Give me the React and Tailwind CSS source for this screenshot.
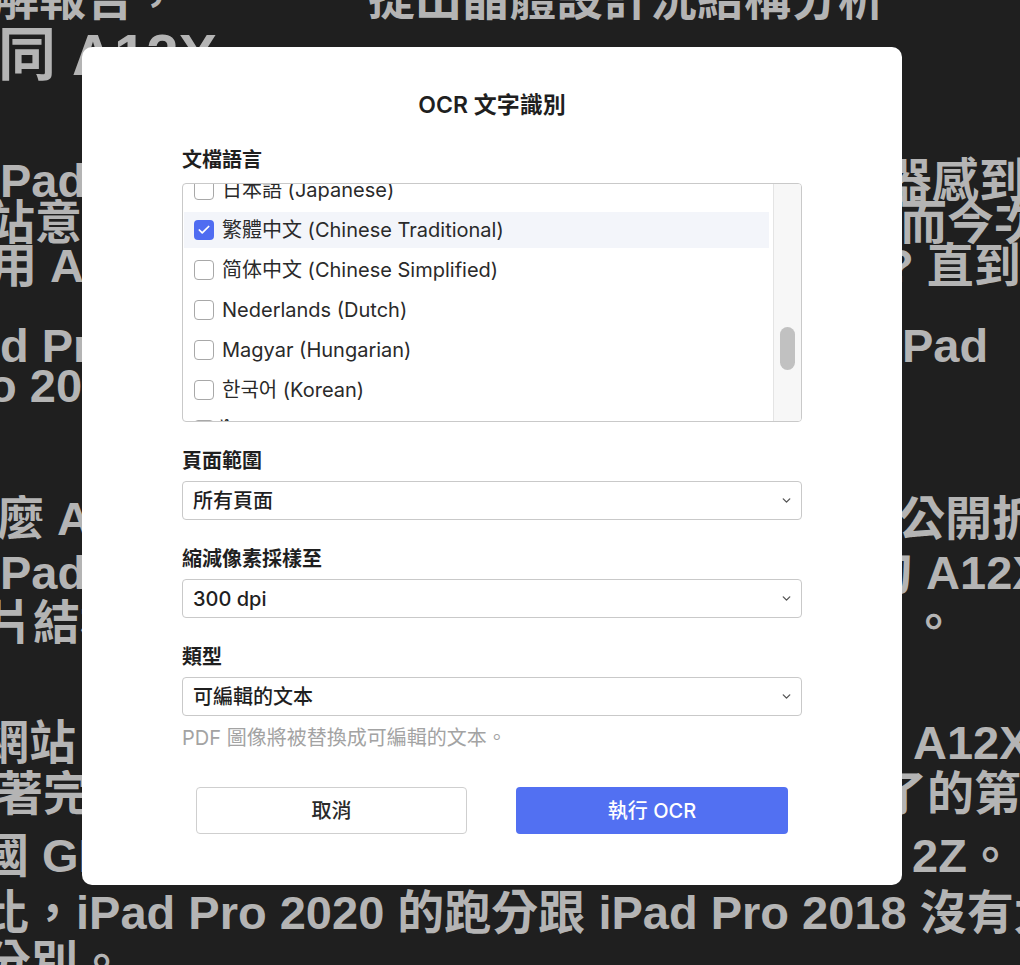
import React from "react";
import { Check, ChevronDown } from "lucide-react";

const ui = "font-['Inter','Noto_Sans_CJK_TC',sans-serif]";
const bgFont = "font-['Liberation_Sans','Noto_Sans_CJK_TC',sans-serif]";

const languages = [
  { label: "日本語 (Japanese)", checked: false },
  { label: "繁體中文 (Chinese Traditional)", checked: true },
  { label: "简体中文 (Chinese Simplified)", checked: false },
  { label: "Nederlands (Dutch)", checked: false },
  { label: "Magyar (Hungarian)", checked: false },
  { label: "한국어 (Korean)", checked: false },
  { label: "ไทย (Thai)", checked: false },
];

// one line of the article behind the dialog: a left fragment and a right fragment
const Line = ({ h, mt = "", left, leftShift = "", right, rightShift = "", size = "text-[47px]", full = false }) => (
  <div className={`flex items-center whitespace-nowrap ${h} ${mt} ${size} leading-none`}>
    {full ? (
      <span className={`inline-block ${leftShift}`}>{left}</span>
    ) : (
      <div className="w-[880px] shrink-0 overflow-hidden">
        <span className={`inline-block ${leftShift}`}>{left}</span>
      </div>
    )}
    {right && <span className={`inline-block ${rightShift}`}>{right}</span>}
  </div>
);

const Select = ({ value }) => (
  <div className="mt-[6px] flex h-[39px] items-center justify-between rounded-[4px] border border-[#c9c9c9] bg-white pl-[10px] pr-[8px]">
    <span className="text-[20px] font-medium text-[#1f1f1f]">{value}</span>
    <ChevronDown size={13} strokeWidth={2.5} className="text-[#555]" />
  </div>
);

const Label = ({ children, mt = "mt-[25px]" }) => (
  <div className={`${mt} text-[20px] leading-[28px] font-semibold text-[#1f1f1f]`}>{children}</div>
);

export default function App() {
  return (
    <div className="relative h-[965px] w-[1020px] overflow-hidden bg-[#1f1f1f]">
      {/* article text in the background */}
      <div className={`${bgFont} font-bold text-[#b4b4b4]`}>
        <Line h="h-[48px]" mt="mt-[-26px]" left="解報告，　　　　提出晶體設計況結構分析了" leftShift="ml-[-8px]" />
        <Line h="h-[66px]" size="text-[58px]" left="同 A12X" leftShift="ml-[-2px]" />
        <Line h="h-[40px]" mt="mt-[72px]" left="Pad" right="器感到" rightShift="ml-[5px]" />
        <Line h="h-[44px]" left="站意外" leftShift="ml-[-12px]" right="而今次" rightShift="ml-[20px]" />
        <Line h="h-[42px]" left="用 A12X" leftShift="ml-[-10px]" right="? 直到" rightShift="ml-[5px]" />
        <Line h="h-[40px]" mt="mt-[39px]" left="d Pro" right="Pad" rightShift="ml-[22px]" />
        <Line h="h-[40px]" left="o 2018" leftShift="ml-[-12px]" />
        <Line h="h-[40px]" mt="mt-[93px]" left="麼 A12X" leftShift="ml-[-3px]" right="公開拆" rightShift="ml-[18px]" />
        <Line h="h-[68px]" left="Pad Pro" right="句 A12X" rightShift="ml-[-14px]" />
        <Line h="h-[32px]" left="片結構" leftShift="ml-[-14px]" right="。" rightShift="ml-[30px]" />
        <Line h="h-[40px]" mt="mt-[84px]" left="網站" leftShift="ml-[-18px]" right="A12X" rightShift="ml-[33px]" />
        <Line h="h-[62px]" left="著完全" leftShift="ml-[-4px]" right="了的第" rightShift="ml-[0px]" />
        <Line h="h-[62px]" left="國 GPU" leftShift="ml-[-18px]" right="2Z。" rightShift="ml-[32px]" />
        <Line h="h-[52px]" full left="比，iPad Pro 2020 的跑分跟 iPad Pro 2018 沒有太大" leftShift="ml-[-18px]" />
        <Line h="h-[48px]" left="分別。" leftShift="ml-[-16px]" />
      </div>

      {/* OCR dialog */}
      <div className={`${ui} absolute left-[82px] top-[47px] flex h-[838px] w-[820px] flex-col rounded-[10px] bg-white px-[100px] pt-[42px]`}>
        <h2 className="text-center text-[23px] leading-[32px] font-semibold text-[#1f1f1f]">OCR 文字識別</h2>

        <Label>文檔語言</Label>
        <div className="mt-[9px] flex h-[239px] overflow-hidden rounded-[4px] border border-[#c9c9c9]">
          <ul className="ml-[1px] mr-[4px] mt-[-12px] flex flex-1 flex-col gap-[4px]">
            {languages.map((lang) => (
              <li
                key={lang.label}
                className={`flex h-[36px] shrink-0 items-center gap-[8px] pl-[10px] ${lang.checked ? "bg-[#f3f5fa]" : ""}`}
              >
                {lang.checked ? (
                  <span className="flex h-[20px] w-[20px] items-center justify-center rounded-[4px] bg-[#4f6cf1]">
                    <Check size={14} strokeWidth={3} className="text-white" />
                  </span>
                ) : (
                  <span className="h-[20px] w-[20px] rounded-[4px] border border-[#a8a8a8] bg-white" />
                )}
                <span className="text-[20px] text-[#2a2a2a]">{lang.label}</span>
              </li>
            ))}
          </ul>
          {/* scrollbar track */}
          <div className="w-[28px] shrink-0 border-l border-[#e4e4e4] bg-[#f7f7f7]">
            <div className="mx-auto mt-[143px] h-[43px] w-[15px] rounded-full bg-[#c1c1c1]" />
          </div>
        </div>

        <Label>頁面範圍</Label>
        <Select value="所有頁面" />

        <Label>縮減像素採樣至</Label>
        <Select value="300 dpi" />

        <Label>類型</Label>
        <Select value="可編輯的文本" />
        <p className="mt-[8px] text-[20px] leading-[28px] text-[#a3a3a3]">PDF 圖像將被替換成可編輯的文本。</p>

        <div className="mt-[35px] flex justify-center gap-[49px]">
          <button className="flex h-[47px] w-[271px] items-center justify-center rounded-[4px] border border-[#cfcfcf] bg-white text-[20px] font-medium text-[#2a2a2a]">
            取消
          </button>
          <button className="flex h-[47px] w-[272px] items-center justify-center rounded-[4px] bg-[#5270f2] text-[20px] font-medium text-white">
            執行 OCR
          </button>
        </div>
      </div>
    </div>
  );
}
